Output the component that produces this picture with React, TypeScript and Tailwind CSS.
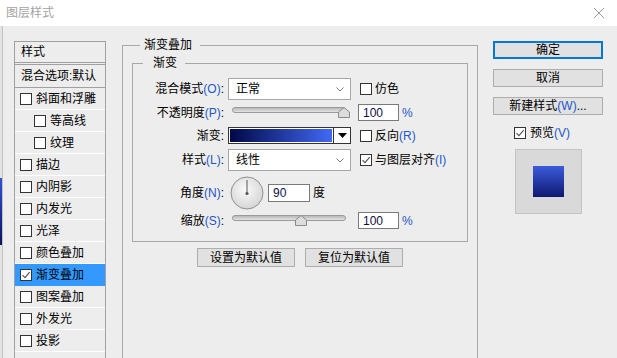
import clsx from "clsx";

const Key = ({ k }: { k: string }) => <span className="text-[#1f56c8]">({k})</span>;

function Check({ on }: { on?: boolean }) {
  return (
    <span className="flex h-[12px] w-[12px] shrink-0 items-center justify-center border border-[#333] bg-white">
      {on && (
        <svg width="10" height="10" viewBox="0 0 10 10">
          <path d="M1.5 5.2 4 7.7 8.7 2.2" fill="none" stroke="#555" strokeWidth="1.2" />
        </svg>
      )}
    </span>
  );
}

function Select({ value }: { value: string }) {
  return (
    <div className="ml-[4px] flex h-[22px] w-[123px] items-center justify-between border border-[#a6a6a6] bg-white pl-[7px] pr-[6px]">
      <span>{value}</span>
      <svg width="8" height="5" viewBox="0 0 8 5">
        <path d="M0.5 0.5 4 4 7.5 0.5" fill="none" stroke="#777" />
      </svg>
    </div>
  );
}

function Slider({ thumb }: { thumb: string }) {
  return (
    <div className="ml-[4px] w-[123px]">
      <div className="relative ml-[4px] h-[12px] w-[114px]">
        <div className="h-[6px] rounded-full border border-[#9a9a9a] bg-linear-to-b from-[#b9b9b9] to-[#e4e4e4]" />
        <svg className={clsx("absolute top-0", thumb)} width="12" height="11" viewBox="0 0 12 11">
          <path d="M0.5 10.5V5L6 0.6 11.5 5v5.5Z" fill="#dcdcdc" stroke="#8a8a8a" />
        </svg>
      </div>
    </div>
  );
}

function NumBox({ value, w }: { value: string; w: string }) {
  return <div className={clsx("flex h-[17px] items-center border border-[#7a7a7a] bg-white pl-[4px] text-[#101040]", w)}>{value}</div>;
}

function Btn({ children, primary }: { children: React.ReactNode; primary?: boolean }) {
  return (
    <div
      className={clsx(
        "flex h-[18px] w-full items-center justify-center bg-[#e1e1e1]",
        primary ? "border-2 border-[#0078d7]" : "border border-[#adadad]",
      )}
    >
      {children}
    </div>
  );
}

const effects = [
  { t: "斜面和浮雕" },
  { t: "等高线", sub: true },
  { t: "纹理", sub: true },
  { t: "描边" },
  { t: "内阴影" },
  { t: "内发光" },
  { t: "光泽" },
  { t: "颜色叠加" },
  { t: "渐变叠加", on: true },
  { t: "图案叠加" },
  { t: "外发光" },
  { t: "投影" },
];

export default function App() {
  return (
    <div className="h-[358px] w-[617px] overflow-hidden bg-[#ededed] font-['Liberation_Sans','Noto_Sans_CJK_SC',sans-serif] text-[12px] leading-[16px] text-black">
      {/* Title bar */}
      <div className="flex h-[26px] items-center justify-between bg-white pl-[6px] pr-[13px]">
        <span className="text-[#a3a3a3]">图层样式</span>
        <svg width="10" height="10" viewBox="0 0 10 10">
          <path d="M0 0 10 10M10 0 0 10" stroke="#9a9a9a" />
        </svg>
      </div>

      <div className="flex h-[332px]">
        {/* window behind */}
        <div className="flex w-[3px] flex-col border-r border-[#c2c2c2] bg-[#e2e2e2]">
          <div className="h-[152px]" />
          <div className="h-[67px] bg-[linear-gradient(to_bottom,#2f52d8,#0a1460)]" />
        </div>

        <div className="flex items-start pl-[11px] pt-[11px]">
          {/* Style list */}
          <div className="mt-[4px] h-[330px] w-[92px] border border-[#a0a0a0]">
            <div className="flex h-[21px] items-center border-b border-[#a0a0a0] pl-[6px]">样式</div>
            <div className="mt-[1px] flex h-[24px] items-center overflow-hidden whitespace-nowrap border-y border-[#a0a0a0] pl-[6px]">
              混合选项:默认
            </div>
            {effects.map((e) => (
              <div
                key={e.t}
                className={clsx(
                  "flex h-[22px] items-center gap-[4px] border-b",
                  e.sub ? "pl-[19px]" : "pl-[5px]",
                  e.on ? "border-[#3399ff] bg-[#3399ff]" : "border-white",
                )}
              >
                <Check on={e.on} />
                <span>{e.t}</span>
              </div>
            ))}
            <div className="h-[22px] border-b border-white" />
          </div>

          {/* Gradient overlay group */}
          <fieldset className="ml-[16px] h-[340px] w-[356px] border border-[#a8a8a8] px-[9px]">
            <legend className="ml-[8px] pl-[4px] pr-[8px]">渐变叠加</legend>

            <fieldset className="mt-[2px] border border-[#a8a8a8] pb-[12px] pt-[7px]">
              <legend className="ml-[10px] pl-[10px] pr-[8px]">渐变</legend>

              <div className="flex h-[22px] items-center">
                <span className="w-[91px] shrink-0 text-right">混合模式<Key k="O" />:</span>
                <Select value="正常" />
                <div className="ml-[9px] flex items-center gap-[3px]">
                  <Check />
                  <span>仿色</span>
                </div>
              </div>

              <div className="mt-[4px] flex h-[17px] items-center">
                <span className="w-[91px] shrink-0 text-right">不透明度<Key k="P" />:</span>
                <Slider thumb="left-[106px]" />
                <NumBox value="100" w="ml-[7px] w-[41px]" />
                <span className="ml-[3px] text-[#1f56c8]">%</span>
              </div>

              <div className="mt-[6px] flex h-[17px] items-center">
                <span className="w-[91px] shrink-0 text-right">渐变:</span>
                <div className="ml-[4px] flex h-[17px] w-[123px] border border-[#333]">
                  <div className="flex-1 border border-white bg-[linear-gradient(to_right,#000846,#4169f5)]" />
                  <div className="flex w-[17px] items-center justify-center border-l border-[#333] bg-white">
                    <svg width="9" height="5" viewBox="0 0 9 5">
                      <path d="M0 0h9L4.5 5Z" fill="#000" />
                    </svg>
                  </div>
                </div>
                <div className="ml-[9px] flex items-center gap-[3px]">
                  <Check />
                  <span>反向<Key k="R" /></span>
                </div>
              </div>

              <div className="mt-[5px] flex h-[22px] items-center">
                <span className="w-[91px] shrink-0 text-right">样式<Key k="L" />:</span>
                <Select value="线性" />
                <div className="ml-[9px] flex items-center gap-[3px]">
                  <Check on />
                  <span>与图层对齐<Key k="I" /></span>
                </div>
              </div>

              <div className="mt-[5px] flex h-[33px] items-center">
                <span className="w-[91px] shrink-0 text-right">角度<Key k="N" />:</span>
                <svg className="ml-[6px]" width="34" height="34" viewBox="0 0 34 34">
                  <defs>
                    <radialGradient id="dial" cx="0.45" cy="0.4" r="0.6">
                      <stop offset="0" stopColor="#fafafa" />
                      <stop offset="1" stopColor="#d6d6d6" />
                    </radialGradient>
                  </defs>
                  <circle cx="17" cy="17" r="16" fill="url(#dial)" stroke="#8f8f8f" />
                  <path d="M17 17V4" stroke="#555" />
                  <circle cx="17" cy="17.5" r="1.6" fill="#555" />
                </svg>
                <div className="ml-[4px] flex h-[18px] w-[42px] items-center border border-[#7a7a7a] bg-white pl-[4px] text-[#101040]">90</div>
                <span className="ml-[3px]">度</span>
              </div>

              <div className="mt-[3px] flex h-[17px] items-center">
                <span className="w-[91px] shrink-0 text-right">缩放<Key k="S" />:</span>
                <Slider thumb="left-[63px]" />
                <NumBox value="100" w="ml-[7px] w-[41px]" />
                <span className="ml-[3px] text-[#1f56c8]">%</span>
              </div>
            </fieldset>

            <div className="mt-[6px] flex justify-center gap-[10px]">
              <div className="flex h-[19px] w-[98px] items-center justify-center border border-[#adadad] bg-[#e1e1e1]">设置为默认值</div>
              <div className="flex h-[19px] w-[98px] items-center justify-center border border-[#adadad] bg-[#e1e1e1]">复位为默认值</div>
            </div>
          </fieldset>

          {/* Right column */}
          <div className="ml-[15px] mt-[4px] flex w-[110px] flex-col items-center">
            <Btn primary>确定</Btn>
            <div className="mt-[10px] w-full">
              <Btn>取消</Btn>
            </div>
            <div className="mt-[10px] w-full">
              <Btn>新建样式<Key k="W" />...</Btn>
            </div>
            <div className="mt-[10px] flex items-center gap-[4px] self-start pl-[21px]">
              <Check on />
              <span>预览<Key k="V" /></span>
            </div>
            <div className="mt-[8px] flex h-[65px] w-[67px] items-center justify-center border border-[#c4c4c4] bg-[#d9d9d9]">
              <div className="h-[31px] w-[31px] bg-[linear-gradient(to_bottom,#3b5bdc,#0e1870)]" />
            </div>
          </div>
        </div>
      </div>
    </div>
  );
}
